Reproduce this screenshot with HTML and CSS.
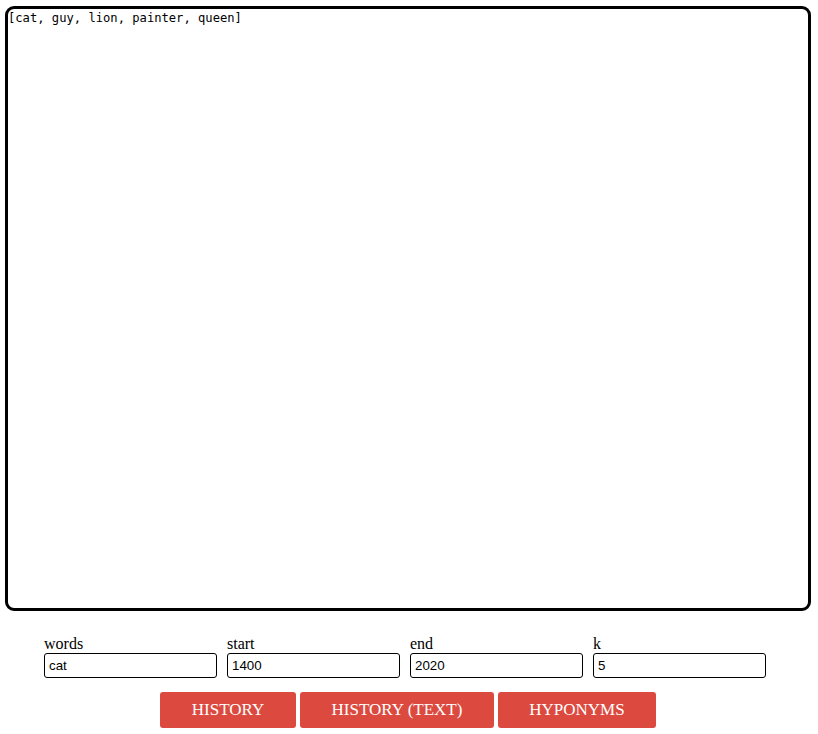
FILE: index.html
```html
<!DOCTYPE html>
<html>
<head>
<meta charset="utf-8">
<link rel="stylesheet" href="styles.css">
</head>
<body>
<div class="output">[cat, guy, lion, painter, queen]</div>
<div class="fields">
  <div class="field"><label>words</label><input type="text" value="cat"></div>
  <div class="field"><label>start</label><input type="text" value="1400"></div>
  <div class="field"><label>end</label><input type="text" value="2020"></div>
  <div class="field"><label>k</label><input type="text" value="5"></div>
</div>
<div class="buttons">
  <button class="btn b1">HISTORY</button>
  <button class="btn b2">HISTORY (TEXT)</button>
  <button class="btn b3">HYPONYMS</button>
</div>
</body>
</html>
```
FILE: styles.css
```css
html, body { margin: 0; padding: 0; background: #fff; }
body { font-family: "Liberation Serif", "Times New Roman", serif; font-size: 16px; color: #000; }
.output {
  box-sizing: border-box;
  margin: 6px 0 0 5px;
  width: 806px;
  height: 605px;
  border: 3px solid #000;
  border-radius: 9px;
  padding: 2px 0;
  font-family: "DejaVu Sans Mono", monospace;
  font-size: 12.15px;
  line-height: 14px;
  white-space: pre;
}
.fields {
  display: flex;
  gap: 10px;
  margin: 24px 0 0 44px;
}
.field { display: flex; flex-direction: column; width: 173px; }
.field label { display: block; line-height: 18px; height: 18px; }
.field input {
  box-sizing: border-box;
  width: 173px;
  height: 25px;
  margin: 0;
  border: 1px solid #000;
  border-radius: 3px;
  padding: 1px 4px;
  font-family: "Liberation Sans", Arial, sans-serif;
  font-size: 13.33px;
  color: #000;
  background: #fff;
}
.buttons {
  display: flex;
  justify-content: center;
  gap: 4px;
  margin-top: 14px;
  padding-right: 2px;
}
.btn {
  box-sizing: border-box;
  height: 36px;
  border: none;
  border-radius: 3px;
  background: #dc4a3f;
  color: #fff;
  font-family: "Liberation Serif", "Times New Roman", serif;
  font-size: 17px;
  padding: 0;
}
.b1 { width: 136px; }
.b2 { width: 194px; }
.b3 { width: 158px; }
```
